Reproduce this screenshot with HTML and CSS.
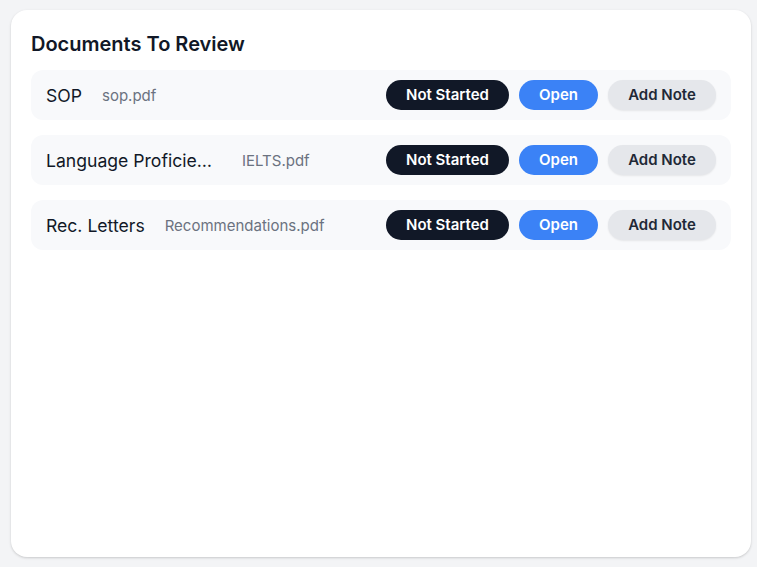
FILE: index.html
```html
<!DOCTYPE html>
<html lang="en">
<head>
<meta charset="utf-8">
<title>Documents To Review</title>
<link rel="stylesheet" href="styles.css">
</head>
<body>
<section class="card">
  <h2 class="title">Documents To Review</h2>
  <div class="list">
    <div class="row">
      <div class="info">
        <span class="name">SOP</span>
        <span class="file">sop.pdf</span>
      </div>
      <div class="actions">
        <span class="btn status">Not Started</span>
        <button class="btn open">Open</button>
        <button class="btn note">Add Note</button>
      </div>
    </div>
    <div class="row">
      <div class="info">
        <span class="name" title="Language Proficiency">Language Proficiency</span>
        <span class="file">IELTS.pdf</span>
      </div>
      <div class="actions">
        <span class="btn status">Not Started</span>
        <button class="btn open">Open</button>
        <button class="btn note">Add Note</button>
      </div>
    </div>
    <div class="row">
      <div class="info">
        <span class="name">Rec. Letters</span>
        <span class="file">Recommendations.pdf</span>
      </div>
      <div class="actions">
        <span class="btn status">Not Started</span>
        <button class="btn open">Open</button>
        <button class="btn note">Add Note</button>
      </div>
    </div>
  </div>
</section>
</body>
</html>
```

FILE: styles.css
```css
* { box-sizing: border-box; }
html, body { margin: 0; }
body {
  background: #f3f4f6;
  font-family: Inter, "Noto Sans", "Liberation Sans", sans-serif;
  padding: 10px 0 0 11px;
  height: 567px;
  overflow: hidden;
}
.card {
  width: 740px;
  height: 547px;
  background: #ffffff;
  border-radius: 16px;
  box-shadow: 0 1px 3px rgba(0,0,0,0.12), 0 1px 2px rgba(0,0,0,0.06);
  padding: 20px;
}
.title {
  margin: 0 0 12px;
  font-size: 20px;
  line-height: 28px;
  font-weight: 600;
  color: #111827;
}
.list {
  display: flex;
  flex-direction: column;
  gap: 15px;
}
.row {
  display: flex;
  align-items: center;
  justify-content: space-between;
  background: #f8f9fb;
  border-radius: 12px;
  padding: 10px 15px;
  height: 50px;
}
.info {
  display: flex;
  align-items: center;
  gap: 20px;
  min-width: 0;
}
.name {
  font-size: 17.6px;
  font-weight: 400;
  color: #111827;
  max-width: 176px;
  white-space: nowrap;
  overflow: hidden;
  text-overflow: ellipsis;
}
.file {
  font-size: 15px;
  color: #6b7280;
}
.actions {
  display: flex;
  align-items: center;
  gap: 10px;
}
.btn {
  display: inline-flex;
  align-items: center;
  justify-content: center;
  height: 30px;
  padding: 0 20px;
  border: none;
  border-radius: 999px;
  font-family: inherit;
  font-size: 15px;
  font-weight: 600;
  line-height: 20px;
}
.status { background: #111827; color: #ffffff; width: 123px; }
.open { background: #3b82f6; color: #ffffff; width: 79px; }
.note {
  background: #e5e7eb;
  color: #1f2937;
  width: 108px;
  box-shadow: 0 1px 2px rgba(0,0,0,0.08);
}
```
